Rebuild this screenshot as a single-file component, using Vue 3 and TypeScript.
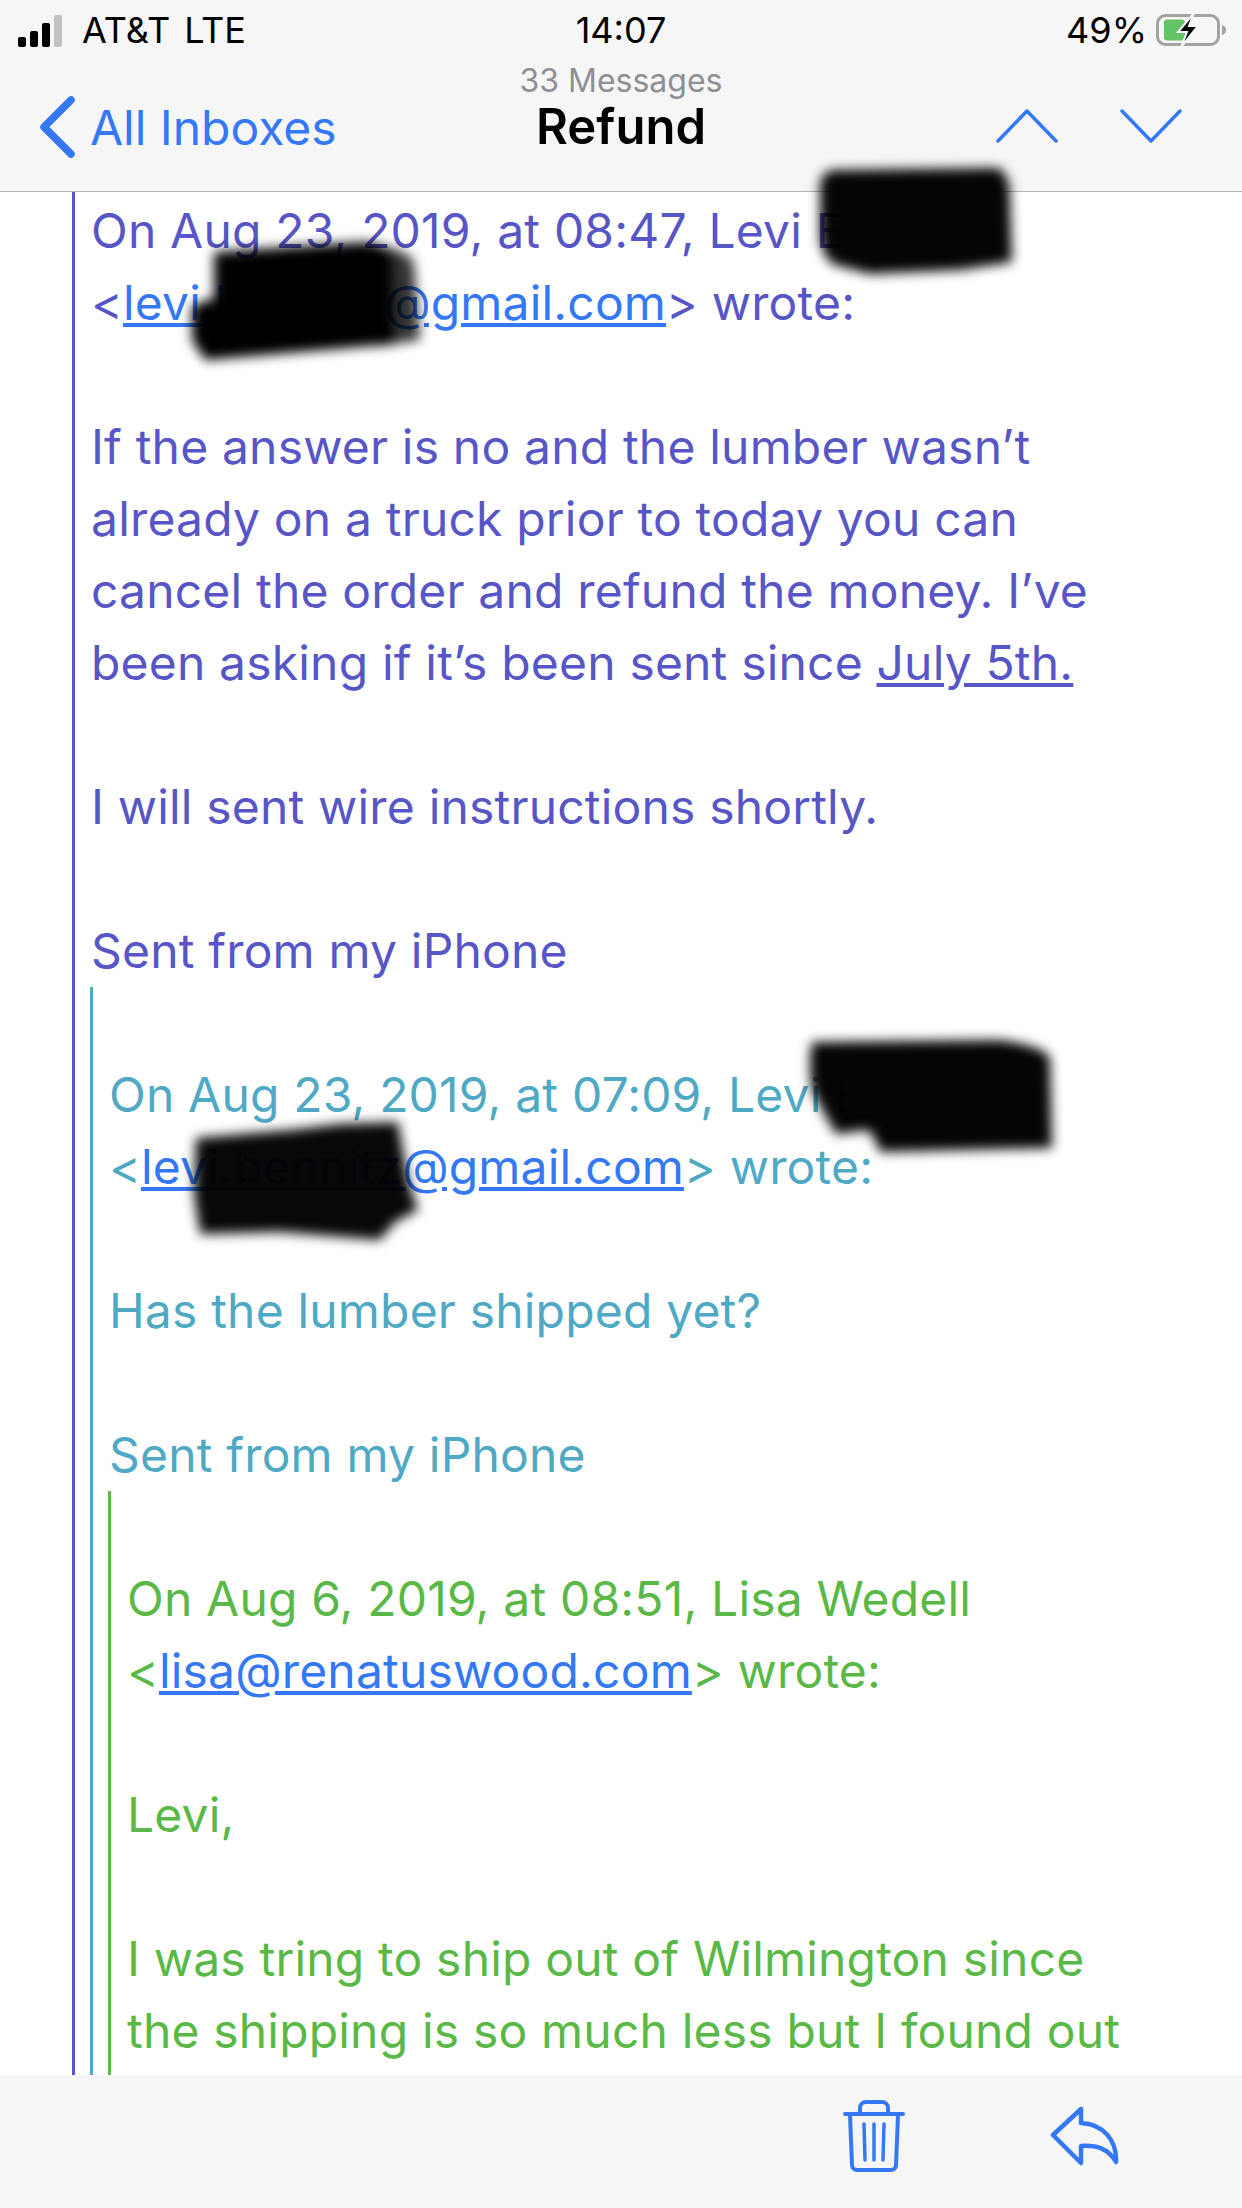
<template>
  <div class="screen">
    <header class="top">
      <div class="status">
        <div class="status-left">
          <span class="bars">
            <i class="bar b1"></i><i class="bar b2"></i><i class="bar b3"></i><i class="bar b4"></i>
          </span>
          <span class="carrier">AT&amp;T</span>
          <span class="carrier">LTE</span>
        </div>
        <div class="clock">14:07</div>
        <div class="status-right">
          <span>49%</span>
          <svg width="72" height="36" viewBox="0 0 72 36">
            <rect x="1.500" y="3.500" width="61" height="29" rx="8" fill="none" stroke="#a3a3a3" stroke-width="3" />
            <rect x="8" y="7.500" width="21" height="21" rx="3" fill="#62c466" />
            <path d="M66 13c2.500.5 4 2.500 4 5s-1.500 4.500-4 5z" fill="#a3a3a3" />
            <path d="M38 1 22 20h9l-6 15 17-21h-9z" fill="#000" stroke="#f6f6f7" stroke-width="2" />
          </svg>
        </div>
      </div>
      <div class="nav">
        <div class="back">
          <svg width="38" height="64" viewBox="0 0 38 64">
            <path d="M33 5 6 32l27 27" fill="none" stroke="#3478f6" stroke-width="7.500" stroke-linecap="round" stroke-linejoin="round" />
          </svg>
          <span>All Inboxes</span>
        </div>
        <div class="title">
          <div class="count">33 Messages</div>
          <div class="subject">Refund</div>
        </div>
        <div class="arrows">
          <svg width="62" height="36" viewBox="0 0 62 36">
            <path d="M2 33 31 3l29 30" fill="none" stroke="#3478f6" stroke-width="3.500" stroke-linecap="round" stroke-linejoin="round" />
          </svg>
          <svg width="62" height="36" viewBox="0 0 62 36">
            <path d="M2 3l29 30L60 3" fill="none" stroke="#3478f6" stroke-width="3.500" stroke-linecap="round" stroke-linejoin="round" />
          </svg>
        </div>
      </div>
    </header>

    <main class="mail">
      <blockquote class="quote purple">
        On Aug 23, 2019, at 08:47, Levi E<br />
        &lt;<a>levi.bennitz@gmail.com</a>&gt; wrote:<br />
        <br />
        If the answer is no and the lumber wasn’t<br />
        already on a truck prior to today you can<br />
        cancel the order and refund the money. I’ve<br />
        been asking if it’s been sent since <u>July 5th.</u><br />
        <br />
        I will sent wire instructions shortly.<br />
        <br />
        Sent from my iPhone
        <blockquote class="quote teal">
          <br />
          On Aug 23, 2019, at 07:09, Levi E<br />
          &lt;<a>levi.bennitz@gmail.com</a>&gt; wrote:<br />
          <br />
          Has the lumber shipped yet?<br />
          <br />
          Sent from my iPhone
          <blockquote class="quote green">
            <br />
            On Aug 6, 2019, at 08:51, Lisa Wedell<br />
            &lt;<a>lisa@renatuswood.com</a>&gt; wrote:<br />
            <br />
            Levi,<br />
            <br />
            I was tring to ship out of Wilmington since<br />
            the shipping is so much less but I found out
          </blockquote>
        </blockquote>
      </blockquote>
    </main>

    <footer class="bottom">
      <svg width="64" height="74" viewBox="0 0 64 74">
        <g fill="none" stroke="#3478f6" stroke-linecap="round" stroke-linejoin="round">
          <path d="M2 14h58" stroke-width="4" />
          <path d="M17 13V8a6 6 0 0 1 6-6h16a6 6 0 0 1 6 6v5" stroke-width="4" />
          <path d="M7 15l2 50a5 5 0 0 0 5 5h34a5 5 0 0 0 5-5l2-50" stroke-width="4" />
          <path d="M21 24l1 36M31 24v36M41 24l-1 36" stroke-width="3.500" />
        </g>
      </svg>
      <svg class="reply" width="70" height="60" viewBox="0 0 70 60">
        <path d="M31 3 3 29l28 28V40c15-1 27 2 35 16 1-22-13-38-35-39z" fill="none" stroke="#3478f6" stroke-width="4.500" stroke-linejoin="round" />
      </svg>
    </footer>

    <svg class="scribbles" width="1242" height="2208" viewBox="0 0 1242 2208">
      <defs>
        <filter id="smear"><feGaussianBlur stdDeviation="6" /></filter>
      </defs>
      <g fill="#000" filter="url(#smear)">
        <path fill-opacity="0.98" d="M832 170l166-2q12 6 12 30l2 64-52 8-90 4-38-10q-12-12-12-30v-48q0-12 12-16z" />
        <path d="M214 252l150-10q26 2 28 20l2 82-94 8-95 8-13-20v-34l22-8z" />
        <path fill-opacity="0.8" d="M380 246q30 4 34 18l6 76-40 6z" />
        <path fill-opacity="0.98" d="M812 1042l188-2q44 6 50 18l2 90-172 4q-6-16-12-22l-32 4q-12-20-24-44-4-30 0-48z" />
        <path fill-opacity="0.97" d="M196 1138l94-8 50-6 58-2 10 58 10 30-23 12-15 18-50-4-50-4-80 2-6-40z" />
      </g>
    </svg>
  </div>
</template>

<script setup lang="ts">
</script>

<style>
html,
body {
  margin: 0;
  background: #fff;
}
</style>

<style scoped>
.screen {
  position: relative;
  width: 1242px;
  height: 2208px;
  display: flex;
  flex-direction: column;
  overflow: hidden;
  background: #fff;
  font-family: Inter, "Liberation Sans", sans-serif;
}

.top {
  flex: none;
  height: 192px;
  box-sizing: border-box;
  background: #f6f6f7;
  border-bottom: 1px solid #b5b5b7;
}

.status {
  display: grid;
  grid-template-columns: 1fr auto 1fr;
  align-items: center;
  height: 60px;
  padding: 0 14px;
  font-size: 36px;
  color: #000;
}

.status-left {
  display: flex;
  align-items: center;
  gap: 14px;
}

.bars {
  display: flex;
  align-items: flex-end;
  gap: 4px;
  height: 34px;
  margin: 0 6px 0 4px;
}

.bar {
  width: 8px;
  border-radius: 2px;
  background: #000;
}

.b1 { height: 10px; }
.b2 { height: 16px; }
.b3 { height: 24px; }
.b4 { height: 32px; background: #c2c2c2; }

.status-right {
  display: flex;
  align-items: center;
  justify-content: flex-end;
  gap: 9px;
}

.nav {
  display: grid;
  grid-template-columns: 1fr auto 1fr;
  align-items: flex-start;
  padding: 0 38px;
}

.back {
  display: flex;
  align-items: center;
  gap: 14px;
  height: 66px;
  margin-top: 34px;
  font-size: 48px;
  color: #3478f6;
}

.title {
  text-align: center;
}

.count {
  margin-top: 3px;
  font-size: 32px;
  line-height: 36px;
  color: #8e8e93;
}

.subject {
  font-size: 49px;
  line-height: 56px;
  font-weight: 600;
  color: #000;
}

.arrows {
  display: flex;
  justify-content: flex-end;
  gap: 62px;
  margin: 48px 22px 0 0;
}

.mail {
  flex: 1;
  min-height: 0;
  overflow: hidden;
  padding-left: 72px;
}

.quote {
  margin: 0;
  padding-left: 16px;
  font-size: 48px;
  letter-spacing: 0.18px;
  line-height: 72px;
  white-space: nowrap;
}

.quote .quote {
  margin-left: -1px;
}

.quote a {
  color: #3478f6;
  text-decoration: underline;
}

.purple { border-left: 3px solid #5856c6; color: #5856c6; padding-top: 3px; }
.teal { border-left: 3px solid #4fa9c4; color: #4fa9c4; }
.green { border-left: 3px solid #5ab946; color: #5ab946; padding-bottom: 400px; }

.bottom {
  flex: none;
  height: 133px;
  box-sizing: border-box;
  display: flex;
  justify-content: flex-end;
  align-items: flex-start;
  gap: 143px;
  padding: 25px 122px 0 0;
  background: #f6f6f7;
}

.reply {
  margin-top: 6px;
}

.scribbles {
  position: absolute;
  top: 0;
  left: 0;
  pointer-events: none;
}
</style>
